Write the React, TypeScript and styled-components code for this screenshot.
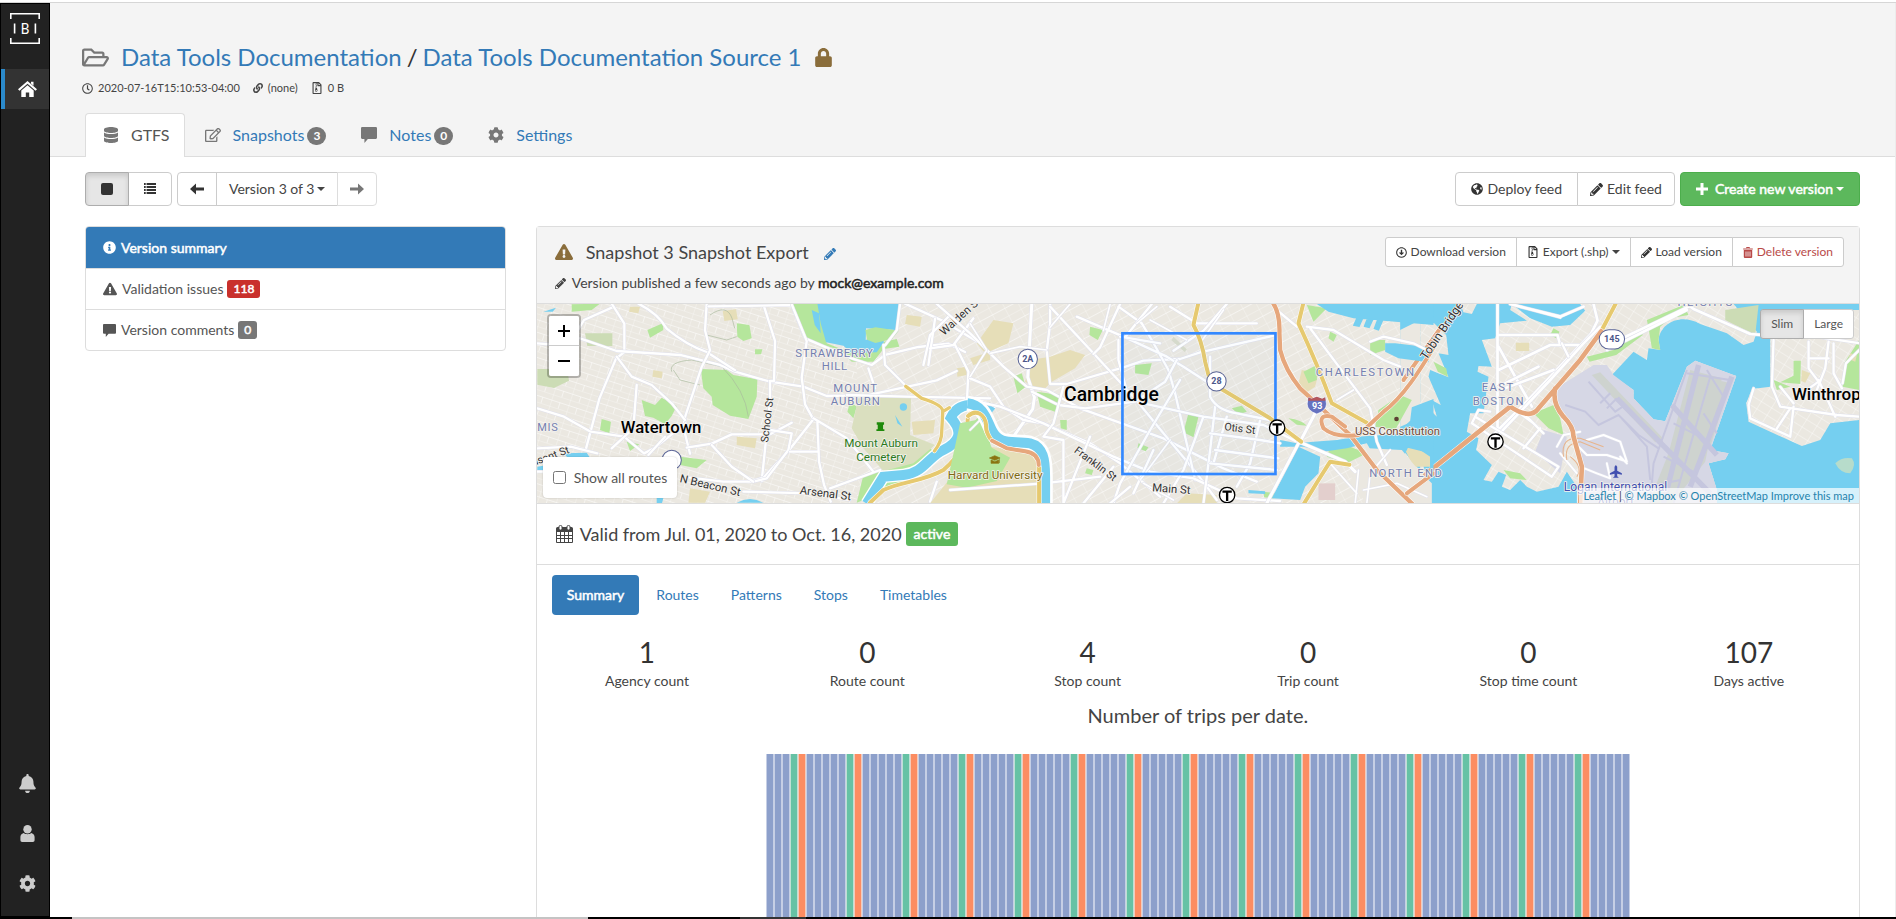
import React from "react";
import styled, { createGlobalStyle, css } from "styled-components";
import {
  FaRegFolderOpen,
  FaRegClock,
  FaRegFileArchive,
  FaDatabase,
  FaRegEdit,
  FaLock,
  FaBell,
  FaGlobeAmericas,
  FaPencilAlt,
  FaInfoCircle,
  FaExclamationTriangle,
  FaLink,
  FaRegArrowAltCircleDown,
  FaCog,
} from "react-icons/fa";

const GlobalStyle = createGlobalStyle`
  * { box-sizing: border-box; }
  body {
    margin: 0;
    background: #fff;
    color: #444;
    font: 14px/20px Lato, "Liberation Sans", sans-serif;
  }
  svg { display: block; flex: none; }
  a { color: #337ab7; text-decoration: none; }
  button { font: inherit; color: inherit; cursor: pointer; }
  h1, h2, h3, p { margin: 0; font-weight: 400; }
`;

const strong = css`
  -webkit-text-stroke: 0.5px currentColor;
`;

const Shell = styled.div`
  display: flex;
  flex-direction: column;
  min-height: 100vh;
`;
const TopRule = styled.div`
  height: 3px;
  border-bottom: 1px solid #d6d6d6;
`;
const Body = styled.div`
  flex: 1;
  display: flex;
  border-right: 1px solid #ececec;
`;
const BottomRule = styled.div`
  height: 2px;
  background: linear-gradient(
    90deg,
    #000 0 72px,
    #c4c4c4 72px 588px,
    #000 588px 740px,
    #333 740px 806px,
    #000 806px
  );
`;

const Sidebar = styled.nav`
  width: 50px;
  flex: none;
  display: flex;
  flex-direction: column;
  background: #222;
  border: 1px solid #000;
`;
const Logo = styled.a`
  display: block;
  padding: 9px 9px 25px;
`;
const SideLink = styled.a<{ $active?: boolean }>`
  display: flex;
  align-items: center;
  justify-content: center;
  height: ${(p) => (p.$active ? 40 : 50)}px;
  color: ${(p) => (p.$active ? "#fff" : "#ccc")};
  padding-left: ${(p) => (p.$active ? 0 : 4)}px;
  ${(p) =>
    p.$active &&
    css`
      background: #333;
      border-left: 4px solid #2b8acb;
    `}
`;
const SideBottom = styled.div`
  margin-top: auto;
  padding-bottom: 8px;
`;

const Main = styled.main`
  flex: 1;
  min-width: 0;
`;
const Header = styled.header`
  background: #f4f4f4;
  border-bottom: 1px solid #ddd;
  padding: 40px 35px 0 32px;
`;
const TitleRow = styled.h1`
  display: flex;
  align-items: center;
  height: 28px;
  font-size: 24px;
  line-height: 28px;
  > svg:first-child { color: #777; margin-right: 12px; }
  > svg:last-child { color: #8a6d3b; margin-left: 12px; }
`;
const Slash = styled.span`
  margin: 0 5px;
  color: #333;
`;
const Meta = styled.div`
  display: flex;
  gap: 13px;
  margin-top: 8px;
  font-size: 11px;
  line-height: 18px;
`;
const MetaItem = styled.span`
  display: flex;
  align-items: center;
  gap: 5px;
`;
const TabBar = styled.nav`
  display: flex;
  margin: 16px 0 -1px 3px;
`;
const Tab = styled.a<{ $active?: boolean }>`
  display: flex;
  align-items: center;
  height: 44px;
  padding: 0 14px 2px 17px;
  margin-right: 2px;
  font-size: 16px;
  border: 1px solid transparent;
  border-bottom: 0;
  border-radius: 4px 4px 0 0;
  > svg { color: #777; margin-right: 12px; }
  ${(p) =>
    p.$active &&
    css`
      background: #fff;
      border-color: #ddd;
      color: #555;
    `}
`;
const Pill = styled.span`
  margin: 3px 0 0 3px;
  padding: 0 6px;
  border-radius: 10px;
  background: #777;
  color: #fff;
  font-size: 12px;
  font-weight: 700;
  line-height: 18px;
`;

const Content = styled.div`
  padding: 15px 35px 0;
`;
const Toolbar = styled.div`
  display: flex;
  justify-content: space-between;
  margin-bottom: 20px;
`;
const Cluster = styled.div`
  display: flex;
  gap: 5px;
`;
const ButtonGroup = styled.div`
  display: flex;
  > button:not(:first-child) { border-top-left-radius: 0; border-bottom-left-radius: 0; margin-left: -1px; }
  > button:not(:last-child) { border-top-right-radius: 0; border-bottom-right-radius: 0; }
`;
const Button = styled.button<{
  $small?: boolean;
  $active?: boolean;
  $tone?: "success" | "danger" | "muted";
}>`
  display: flex;
  align-items: center;
  justify-content: center;
  gap: 4px;
  height: ${(p) => (p.$small ? 30 : 34)}px;
  padding: 0 ${(p) => (p.$small ? 10 : 12)}px;
  border: 1px solid #ccc;
  border-radius: ${(p) => (p.$small ? 3 : 4)}px;
  background: #fff;
  font-size: ${(p) => (p.$small ? 12 : 14)}px;
  white-space: nowrap;
  > svg { color: #333; }
  ${(p) =>
    p.$active &&
    css`
      background: #e6e6e6;
      border-color: #adadad;
      box-shadow: inset 0 3px 5px rgba(0, 0, 0, 0.125);
      z-index: 1;
    `}
  ${(p) =>
    p.$tone === "success" &&
    css`
      background: #5cb85c;
      border-color: #4cae4c;
      color: #fff;
      ${strong}
      > svg { color: #fff; margin-right: 3px; }
    `}
  ${(p) => p.$tone === "danger" && css`color: #b94a48; > svg { color: #b94a48; }`}
  ${(p) => p.$tone === "muted" && css`border-color: #ddd; > svg { color: #777; }`}
`;
const WideButton = styled(Button)`
  padding: 0 15px;
`;
const Caret = styled.span`
  border-top: 4px solid #333;
  border-top-color: currentColor;
  border-left: 4px solid transparent;
  border-right: 4px solid transparent;
  margin-left: -1px;
`;

const Columns = styled.div`
  display: grid;
  grid-template-columns: 421fr 1325fr;
  gap: 30px;
  align-items: stretch;
`;
const List = styled.div`
  align-self: start;
  border: 1px solid #ddd;
  border-radius: 4px;
  overflow: hidden;
`;
const ListItem = styled.a<{ $active?: boolean }>`
  display: flex;
  align-items: center;
  gap: 4px;
  height: 41px;
  padding-left: 17px;
  color: #555;
  > svg { margin-right: 1px; }
  & + & { border-top: 1px solid #ddd; }
  ${(p) =>
    p.$active &&
    css`
      background: #337ab7;
      color: #fff;
      ${strong}
    `}
`;
const Label = styled.span<{ $bg: string; $large?: boolean }>`
  padding: 0 ${(p) => (p.$large ? 8 : 6)}px;
  border-radius: 3px;
  background: ${(p) => p.$bg};
  color: #fff;
  font-size: ${(p) => (p.$large ? 14 : 12)}px;
  line-height: ${(p) => (p.$large ? 24 : 18)}px;
  ${strong}
`;

const Panel = styled.section`
  border: 1px solid #ddd;
  border-bottom: 0;
  border-radius: 4px 4px 0 0;
`;
const PanelHead = styled.div`
  display: flex;
  justify-content: space-between;
  align-items: flex-start;
  height: 77px;
  padding: 10px 15px 0 18px;
  background: #f4f4f4;
  border-bottom: 1px solid #ddd;
`;
const PanelTitle = styled.h2`
  display: flex;
  align-items: center;
  gap: 13px;
  height: 30px;
  font-size: 18px;
  > svg { color: #8a6d3b; }
`;
const EditLink = styled.a`
  padding: 4px 0 0 2px;
`;
const Published = styled.p`
  display: flex;
  align-items: center;
  height: 32px;
  gap: 6px;
  strong { color: #222; font-weight: 400; ${strong} }
`;

const MapBox = styled.div`
  position: relative;
  height: 199px;
  overflow: hidden;
  background: #ebe8e1;
`;
const MapSvg = styled.svg`
  width: 100%;
  height: 199px;
  font-family: Roboto, "Liberation Sans", sans-serif;
`;
const ZoomControl = styled.div`
  position: absolute;
  top: 10px;
  left: 10px;
  border: 2px solid rgba(0, 0, 0, 0.25);
  border-radius: 4px;
  background-clip: padding-box;
`;
const ZoomButton = styled.button`
  display: flex;
  align-items: center;
  justify-content: center;
  width: 30px;
  height: 29px;
  padding: 0;
  border: 0;
  background: #fff;
  border-radius: 2px 2px 0 0;
  & + & { height: 31px; border-top: 1px solid #ccc; border-radius: 0 0 2px 2px; }
`;
const RouteToggle = styled.label`
  position: absolute;
  left: 6px;
  bottom: 5px;
  display: flex;
  align-items: center;
  gap: 8px;
  width: 134px;
  height: 41px;
  padding-left: 10px;
  border-radius: 4px;
  background: #fff;
  box-shadow: 0 0 2px rgba(0, 0, 0, 0.2);
  color: #555;
  input { margin: 0; width: 13px; height: 13px; }
`;
const SizeSwitch = styled(ButtonGroup)`
  position: absolute;
  top: 5px;
  right: 5px;
  color: #555;
`;
const Attribution = styled.div`
  position: absolute;
  right: 0;
  bottom: 0;
  padding: 0 5px;
  background: rgba(255, 255, 255, 0.7);
  font-size: 11px;
  line-height: 15px;
  a { color: #2583ad; }
`;

const Validity = styled.p`
  display: flex;
  align-items: center;
  gap: 4px;
  height: 62px;
  padding-left: 19px;
  border-top: 1px solid #ddd;
  border-bottom: 1px solid #ddd;
  font-size: 18px;
  > svg { margin-right: 3px; }
`;
const Pills = styled.nav`
  display: flex;
  gap: 2px;
  padding: 10px 15px 0;
`;
const PillLink = styled.a<{ $active?: boolean }>`
  padding: 10px 15px;
  border-radius: 4px;
  ${(p) =>
    p.$active &&
    css`
      background: #337ab7;
      color: #fff;
      ${strong}
    `}
`;
const Stats = styled.dl`
  display: grid;
  grid-template-columns: repeat(6, 1fr);
  margin: 19px 0 0;
  text-align: center;
`;
const Stat = styled.div`
  display: flex;
  flex-direction: column-reverse;
  dt { line-height: 22px; }
  dd { margin: 0; font-size: 28px; line-height: 36px; color: #333; }
`;
const ChartTitle = styled.h3`
  margin-top: 11px;
  font-size: 20px;
  line-height: 24px;
  text-align: center;
`;
const ChartSvg = styled.svg`
  margin: 27px auto 0;
`;

/* ---------- icons ---------- */

const HomeIcon = () => (
  <svg width="19" height="16" viewBox="0 0 19 16" fill="currentColor">
    <path d="M9.500 0L19 8.300l-1.500 1.400-8-7-8 7L0 8.300zM13 .8h2.500v4L13 2.600zM9.500 4.200l6.200 5.400V16h-4.500v-4.500H7.800V16H3.300V9.600z" />
  </svg>
);
const UserIcon = () => (
  <svg width="15" height="17" viewBox="0 0 15 17" fill="currentColor">
    <ellipse cx="7.500" cy="4.300" rx="4.200" ry="4.300" />
    <path d="M3.600 8c2 1.600 5.800 1.600 7.800 0 2 .7 3.200 2 3.200 4v3c0 1.200-.6 2-1.800 2H2.200C1 17 .4 16.200.4 15v-3c0-2 1.200-3.300 3.200-4z" />
  </svg>
);
const BellIcon = () => <FaBell size={19} />;
const CommentIcon = ({ size = 14 }: { size?: number }) => (
  <svg width={size} height={size} viewBox="0 0 14 14" fill="currentColor">
    <path d="M1 0h12a1 1 0 0 1 1 1v8.500a1 1 0 0 1-1 1H6L3 14v-3.500H1a1 1 0 0 1-1-1V1a1 1 0 0 1 1-1z" />
  </svg>
);
const StopIcon = () => (
  <svg width="12" height="12" viewBox="0 0 12 12" fill="currentColor">
    <rect width="12" height="12" rx="2" />
  </svg>
);
const ListIcon = () => (
  <svg width="12" height="12" viewBox="0 0 14 12" fill="currentColor" preserveAspectRatio="none">
    <path d="M0 0h2v2H0zM3 0h11v2H3zM0 3h2v2H0zM3 3h11v2H3zM0 6h2v2H0zM3 6h11v2H3zM0 9h2v2H0zM3 9h11v2H3z" />
  </svg>
);
const ArrowIcon = ({ right }: { right?: boolean }) => (
  <svg width="14" height="12" viewBox="0 0 14 12" fill="currentColor">
    <path d={right ? "M14 6L8 .5v4H0v3h8v4z" : "M0 6l6-5.500v4h8v3H6v4z"} />
  </svg>
);
const PlusIcon = () => (
  <svg width="12" height="12" viewBox="0 0 12 12" fill="currentColor">
    <path d="M4.500 0h3v4.500H12v3H7.500V12h-3V7.500H0v-3h4.500z" />
  </svg>
);
const TrashIcon = () => (
  <svg width="10" height="11" viewBox="0 0 10 11">
    <path d="M3.500 1.200V.5h3v.7M.2 2h9.600" stroke="currentColor" fill="none" />
    <path fill="currentColor" d="M.8 3h8.400v7a1 1 0 0 1-1 1H1.800a1 1 0 0 1-1-1z" />
    <path d="M3 4.500v5M5 4.500v5M7 4.500v5" stroke="#fff" strokeWidth=".8" />
  </svg>
);
const CalendarIcon = () => (
  <svg width="17" height="18" viewBox="0 0 17 18">
    <path fill="currentColor" d="M1.500 2h14A1.500 1.500 0 0 1 17 3.500V17a1 1 0 0 1-1 1H1a1 1 0 0 1-1-1V3.500A1.500 1.500 0 0 1 1.500 2z" />
    <path fill="#fff" d="M1 7h3v3H1zM5 7h3v3H5zM9 7h3v3H9zM13 7h3v3h-3zM1 11h3v2H1zM5 11h3v2H5zM9 11h3v2H9zM13 11h3v2h-3zM1 14h3v3H1zM5 14h3v3H5zM9 14h3v3H9zM13 14h3v3h-3z" />
    <rect x="3" y=".5" width="3" height="4.500" rx="1.300" fill="#fff" stroke="currentColor" />
    <rect x="11" y=".5" width="3" height="4.500" rx="1.300" fill="#fff" stroke="currentColor" />
  </svg>
);
const LogoMark = () => (
  <svg width="30" height="31" viewBox="0 0 30 31" fill="none" stroke="#fff" strokeWidth="1.600">
    <path d="M.8 6V.8h28.400V6M.8 25v5.200h28.400V25" />
    <text x="15" y="20.500" textAnchor="middle" fill="#fff" stroke="none" fontSize="14" fontFamily="Roboto, sans-serif">
      B
    </text>
    <path d="M4.600 10.500v10M25.400 10.500v10" />
  </svg>
);

/* ---------- map ---------- */

const C = {
  land: "#ebe8e1",
  water: "#75cff0",
  park: "#b5e69c",
  sand: "#e6deb8",
  yellow: "#e6c96f",
  orange: "#e6a77c",
  apron: "#d6d7e5",
  runway: "#c5c6de",
  place: "#7480b0",
};

const Road = ({ d, w = 7, color = "#fff" }: { d: string; w?: number; color?: string }) => (
  <g fill="none" strokeLinecap="round" strokeLinejoin="round">
    <path d={d} stroke={color === "#fff" ? "#e0e1ec" : "#fff"} strokeWidth={w + 3} />
    <path d={d} stroke={color} strokeWidth={w} />
  </g>
);
const Halo = ({
  x, y, size = 36, fill = "#333", spacing, weight, rotate, anchor = "middle", children,
}: {
  x: number; y: number; size?: number; fill?: string; spacing?: number; weight?: number;
  rotate?: number; anchor?: "start" | "middle" | "end"; children: string;
}) => (
  <text
    x={x} y={y} fontSize={size} fill={fill} textAnchor={anchor} fontWeight={weight}
    letterSpacing={spacing} stroke="#f4f2ee" strokeWidth="5" strokeLinejoin="round" paintOrder="stroke"
    transform={rotate ? `rotate(${rotate} ${x} ${y})` : undefined}
  >
    {children}
  </text>
);
const Shield = ({ x, y, n, rx = 29 }: { x: number; y: number; n: string; rx?: number }) => (
  <g>
    <rect x={x - rx} y={y - 29} width={rx * 2} height="58" rx="29" fill="#fff" stroke="#5a6496" strokeWidth="3" />
    <text x={x} y={y + 9} fontSize="27" fontWeight="700" fill="#4c568a" textAnchor="middle">{n}</text>
  </g>
);
const Station = ({ x, y }: { x: number; y: number }) => (
  <g>
    <circle cx={x} cy={y} r="23" fill="#fff" stroke="#000" strokeWidth="4" />
    <path d={`M${x - 14} ${y - 10}h28M${x} ${y - 10}v28`} stroke="#000" strokeWidth="7" />
  </g>
);

const WestMap = () => (
  <g transform="translate(530 215) scale(.33333)">
    <g fill={C.park}>
      <path d="M785 264L865 266 890 385 965 415 1035 410 1062 380 1100 372 1108 395 1060 402 1030 440 965 440 930 405 830 375z" />
      <path d="M512 462L590 465 610 480 682 493 680 545 655 612 600 602 548 570 545 545 520 520z" />
      <path d="M620 325L658 330 665 370 640 378 622 365z" />
      <path d="M125 268L210 266 185 285 125 290zM352 345L398 325 400 345 360 368zM675 403l22 0-4 15-18 0zM335 555l40 15 20-22 45 25-15 30-20 25-35-20-25-5zM215 612l28 8-5 35-28-10zM290 680l38 8-28 20zM980 863L1000 780 1060 768 1130 745 1200 700 1220 720 1130 800 1060 830z" />
      <path d="M1380 560L1380 863 1230 863 1270 790 1310 720 1315 640 1350 600z" />
      <path d="M960 560l20 15-10 35-18-20zM450 725l80 10-30 25-50-10z" />
    </g>
    <path fill="#dadfbf" d="M985 550L1143 545 1140 660 1215 690 1150 745 1060 768 1000 700 965 640z" />
    <g fill={C.sand}>
      <path d="M578 288l40-5 5 30-40 5zM1130 300l45 5-5 30-45-8zM1320 430l60-20v25l-50 15zM1280 460l28-5 2 25-28 5zM620 665l60 5-5 30-55-10zM300 275l30 0-5 20-28-5zM370 465l28 5-3 20-28-5zM480 820l60 10-15 33h-50zM1145 620l70-5-5 40-60 5z" />
    </g>
    <path fill="#ccdcb5" d="M165 355h82v38h-75zM22 462h90l5 35-45 22-50-10z" />
    <path fill={C.water} d="M862 266L872 325 888 382 940 392 965 415 1040 412 1062 380 1040 360 1007 375 1008 340 1100 345 1112 266z" />
    <path fill={C.park} d="M1006 345l30-8 70 10-20 25-50 12-25-10z" />
    <path fill={C.water} d="M845 285l22 10 5 60-18-25zM40 290l38-12-10 12zM22 755l30-5v14l-30 4zM100 715l70-2 10 15-60 6zM620 863q40-22 80 0zM1095 600l22 35-15-10zM380 845l20 5-4 14h-16z" />
    <circle cx="1120" cy="576" r="11" fill={C.water} />
    <g fill="none" stroke="#a9ba9d" strokeWidth="2">
      <path d="M530 360l60 15 30-10M540 300q50-35 66 10l8 30M425 470q-10-30 60-35l90 20q70 70 80 150M430 465l20 30 60 15" />
    </g>
    <g>
      <Road d="M22 385l60 5 50-25 30-50 90-40" />
      <Road d="M245 266l38 60v85l-25 20-50 120-40 150" />
      <Road d="M150 370l110 38 190 12 120 30 45 20 105 30 100 15 70 28 120-2 210-45 60-28" />
      <Road d="M325 266q60 30 85 75 60 50 120 70l85 55" />
      <Road d="M530 266l-5 80 15 60-25 50-50 150-5 30 20 80" />
      <Road d="M700 268l35 110-3 120-12 0 0 60-25 240" />
      <Road d="M535 274l160-2 90-2 40 100 140 60 60 20 40-30 100-24 90-10 50 25" />
      <Road d="M785 268l45 110-15 110 10 80 25 45-75 95-75 80-35 10" />
      <Road d="M22 580l80 25 80 45 100 15 60 50 30-15 95-75" />
      <Road d="M260 425l45 60 60 25 60 55 40 50" />
      <Road d="M355 720l50-55M245 700l65-60 10-130M470 698l75-12 60-28 115 0 65-35" />
      <Road d="M720 645l65 10-10 50-65 85-40 10-90 0-100-12" />
      <Road d="M545 690l60 65 65 45M780 710h85M862 620l5 120 15 70 20 50M850 610l100 60 80 100M900 820l150-55" />
      <Road d="M950 540l180 5 250 5M1125 266l110 50 100 60 45 25M1060 390l5 60 60 60M1110 266l-10 80-35 45M1015 460l20 60" />
      <Road d="M1180 450l20-90 60-60M1215 310l-20 140M1275 390l40 80-5 100M1330 310l-60 80-70 10M640 830l200 5 120 20M1220 800l-20 60M1280 780l90 60M22 770h20M22 700l100-5 80 20" />
    </g>
    <circle cx="425" cy="735" r="29" fill="#fff" stroke="#5a6496" strokeWidth="3" />
    <path d="M1386 592C1345 560 1285 560 1262 608C1300 650 1290 680 1240 705C1195 725 1180 775 1120 780L1060 785 1010 866" fill="none" stroke="#fff" strokeWidth="38" />
    <path d="M1386 592C1345 560 1285 560 1262 608C1300 650 1290 680 1240 705C1195 725 1180 775 1120 780L1060 785 1010 866" fill="none" stroke={C.water} strokeWidth="30" />
    <Road color={C.yellow} w={10} d="M1127 514L1175 550Q1240 570 1238 590L1235 650Q1235 680 1213 708M1238 590l20-12" />
    <Road color={C.yellow} w={12} d="M1384 660C1370 580 1320 575 1313 610C1312 690 1290 720 1240 765C1180 800 1110 800 1060 825L1020 863" />
    <Halo x={913} y={425} size={34} fill={C.place} spacing={2}>STRAWBERRY</Halo>
    <Halo x={914} y={465} size={34} fill={C.place} spacing={2}>HILL</Halo>
    <Halo x={977} y={530} size={34} fill={C.place} spacing={3}>MOUNT</Halo>
    <Halo x={977} y={570} size={34} fill={C.place} spacing={3}>AUBURN</Halo>
    <Halo x={22} y={647} size={33} fill={C.place} spacing={2} anchor="start">MIS</Halo>
    <Halo x={393} y={654} size={50} weight={500} fill="#000">Watertown</Halo>
    <Halo x={1053} y={695} size={35} fill="#2b7a1c">Mount Auburn</Halo>
    <Halo x={1053} y={738} size={35} fill="#2b7a1c">Cemetery</Halo>
    <path d="M1040 622h22v7h-3v14h4v5h-24v-5h4v-14h-3z" fill="#1e8a0a" />
    <Halo x={722} y={616} size={32} rotate={-83}>School St</Halo>
    <Halo x={1298} y={312} size={34} rotate={-42}>Walden St</Halo>
    <Halo x={538} y={822} size={34} rotate={13}>N Beacon St</Halo>
    <Halo x={885} y={846} size={34} rotate={7}>Arsenal St</Halo>
    <Halo x={65} y={733} size={32} rotate={-20}>asant St</Halo>
  </g>
);

const CentralMap = () => (
  <g transform="translate(970 290) scale(.33333)">
    <g fill={C.sand}>
      <path d="M70 90l60 10-15 60-70 30-25-30zM180 210l60-10 60-20 45 15-30 40-70 40-30 30-50-30zM60 470l145 20v150H-120l80-100zM995 240l50 10-10 40-30 20-20-30zM650 610l90 5v25H620zM1300 470l80 20v40h-50zM0 600l60-30 30 30-20 40H0z" />
    </g>
    <g fill={C.park}>
      <path d="M-30 400l60-12 35 85 55 30-40 70-90 20-60-10zM130 260l25-10 12 40-25 20zM200 305l70 10-15 50-45-15zM360 110l38 10-15 30-25-15zM495 225l50-5-10 35-40-5zM655 370l30 10-15 62-30-15zM785 355l30-8 15 18-25 8zM505 460l30 12-8 12-25-10zM955 385q40 5 55 22l-30-3zM1010 45l60 10-40 40zM1080 125l20 10-10 20-15-10zM1200 150l45 0 0 30-45 15zM1000 245l40-20 0 45-25 10zM1290 315l35 15-50 90-60-10 10-50zM1080 470l60 0 50 20-60 30-60-20zM880 605l40 5-8 15-30-3zM270 390l20 0 0 30-18-5zM350 535l20 5-5 15-20-5z" />
    </g>
    <path fill="#d9dccb" d="M610 140l40 38-6 8-40-35z" />
    <g fill={C.water}>
      <path d="M1040 42L1390 42 1390 105 1240 92 1150 85 1075 65zM1160 80l20 5-12 26-20-4zM1192 80l20 5-14 30-18-5zM1222 85l18 5-14 32-16-5zM1245 160l30 0 100 12v45l-90-12-40-20z" />
      <path d="M905 625L985 470 1050 500 1045 550 1005 590 990 630z" />
      <path d="M930 450l50 10 50-5 70-5 60-10 120-8 40-40 5-40 65-25V640H1380V500l-60-40-20 40-40-10-30 40-40-70-60 15-70 10-60-15-70 0z" />
      <path d="M835 600l50 4v8l-50-2z" />
    </g>
    <path fill={C.land} d="M1195 475l100 5 50 60 40 40v62h-190l-60-60z" />
    <path fill="#e3cfcd" d="M1045 580h50v50h-50z" />
    <g>
      <Road w={9} d="M185 42l-12 220 20 60-5 35-70 100" />
      <Road d="M240 42v60l-10 80 10 100 50 0 170-50 60-20 110-5 60-20 220-50" />
      <Road d="M-100 42L0 130l100 100 70 60 60 10 100 55 250 90 180 90 100 40" />
      <Road d="M240 50l130 140 120 130 90 110 100 120 60 80" />
      <Road d="M320 80l140 60 130 60 50 30 70 45M450 42l-60 130-20 20M445 50l70 50 30 50 50 90 20 70 60 260M600 50l80 50 180 0" />
      <Road d="M0 265l60 25 40 60 60 40 60 10 140 60 90 60 120 100" />
      <Road d="M0 330l90 20 130 50 210 100 110 45 130 20 130 60 130 8" />
      <Road d="M620 210l-35 65-90 60-150 20-80-10-80-40M520 340l180 40 180 25 110 55M630 270l-90 150-90 160-20 60M700 380l-60 160-60 100M735 350l-15 130-20 160M770 380l-40 140M870 390l-30 130-40 70" />
      <Road d="M720 200l0 120q20 40 80 50l100 20M720 430l150 20 60 10M735 480l190 25M720 520l200 20" />
      <Road w={9} d="M985 460l-90 170-5 10M985 455l140 60 30 30M1040 360l-50 95" />
      <Road d="M920 60l60 50M770 42l-70 80-90 60M450 140l120 20M445 150l0 60 30 110M545 42l-80 100M1010 110l80 10 150 90 50 20M1020 115l90 120 90 120 20 100 30 70M1200 155l40-15 90 20 40 20" />
      <Road d="M280 290l-30 110-30 40 60 10 0 190M-60 600l280-20 170-20M360 440l-80 200M430 530l-90 110M480 590l-60 50M550 480l-60 130" />
      <Road w={5} d="M0 100l50 80-50 80M60 190l90-20 80 10M500 100l60-50M540 90l110 60M760 60l-70 100M520 580l90 50M600 450l-90 120M1260 480l-60 70-10 90M1180 600l100-20 90 40M1150 300l-50 30M0 420l50-50M300 42l-60 70M420 42l-20 80M1165 540l-10 100M1080 520l80 90" />
    </g>
    <g fill="none">
      <path d="M-8 340C40 345 50 390 65 420C90 470 130 450 180 460C220 470 225 510 225 560V640" stroke="#fff" strokeWidth="46" />
      <path d="M-8 340C40 345 50 390 65 420C90 470 130 450 180 460C220 470 225 510 225 560V640" stroke={C.water} strokeWidth="30" />
    </g>
    <Road color={C.yellow} w={12} d="M-6 378C20 355 45 375 48 405Q46 425 62 448M207 530V640" />
    <Road color={C.orange} w={12} d="M66 452L110 475 165 484Q205 490 206 525" />
    <Road color={C.yellow} w={12} d="M685 38L670 105Q695 150 705 215L715 255 745 292 900 385 993 455" />
    <Road color={C.yellow} w={12} d="M1000 38L985 100Q1045 230 1085 340L1190 398M1002 640L1045 570 1080 515 1138 524" />
    <Road color={C.orange} w={13} d="M908 38Q930 70 928 130L930 180Q945 240 990 295L1060 360 1140 435 1220 540 1330 645" />
    <Road color={C.orange} w={12} d="M1395 165C1350 240 1300 320 1240 365L1165 435Q1095 445 1060 415 1040 370 1085 380L1125 410M1310 610l80-60" />
    <Halo x={424} y={334} size={58} weight={500} fill="#000">Cambridge</Halo>
    <rect x="457" y="130" width="459" height="422" fill="#3388ff" fillOpacity=".02" stroke="#3388ff" strokeWidth="8" />
    <Shield x={173} y={207} n="2A" />
    <Shield x={739} y={274} n="28" />
    <path d="M1014 322l10 4 16-6 16 6 10-4 3 20q0 20-29 30-29-10-29-30z" fill="#6672c0" stroke="#fff" strokeWidth="2" />
    <path d="M1015 322l9 4 16-6 16 6 9-4 1 10h-52z" fill="#b4575c" />
    <text x="1041" y="357" fontSize="27" fontWeight="700" fill="#fff" textAnchor="middle">93</text>
    <Halo x={808} y={426} size={32} rotate={7}>Otis St</Halo>
    <Halo x={603} y={608} size={34} rotate={4}>Main St</Halo>
    <Halo x={370} y={530} size={32} rotate={37}>Franklin St</Halo>
    <Halo x={1187} y={258} size={34} fill={C.place} spacing={5}>CHARLESTOWN</Halo>
    <Halo x={1308} y={560} size={34} fill={C.place} spacing={4}>NORTH END</Halo>
    <Halo x={75} y={567} size={35} fill="#7f6a10">Harvard University</Halo>
    <path d="M58 504l16-7 16 7-16 7zM63 510l11 5 12-5v10h-23zM88 506v13" fill="#8a7410" stroke="#8a7410" strokeWidth="2" />
    <Halo x={1282} y={435} size={34} fill="#6c4a3c">USS Constitution</Halo>
    <circle cx="1279" cy="387" r="7" fill="#5c4033" />
    <Halo x={1425} y={128} size={36} rotate={-56}>Tobin Bridge</Halo>
    <Station x={921} y={413} />
    <Station x={771} y={615} />
  </g>
);

const EB_LAND =
  "M275 42L330 85 395 110 450 105 495 62 480 42 940 42 1010 125 1000 155 970 165 920 130 840 102C780 68 720 100 715 150L720 180 685 175 680 210 640 185 575 255 640 300 640 325 700 388 735 394 800 230 825 212 948 258 870 480 925 490 915 508 865 520 890 600 890 640 470 640 470 590 440 545 415 590 350 605 320 590 300 570 270 600 245 590 258 555 235 545 215 575 190 570 215 525 168 480 175 445 140 425 150 370 190 370 205 260 172 245 175 228 215 230 185 150 225 145 240 100 320 92 270 60z";
const WIN_LAND =
  "M1317 60L1180 60 1160 100 1050 145 1050 290 995 297 978 340 985 395 1060 430 1145 468 1200 450 1230 400 1317 390z";
const CH_LAND =
  "M0 90L42 100 78 135 85 195 55 190 85 262 30 240 25 260 62 345 35 330 50 380 20 350 0 385zM120 42l50 0-15 30-25-5zM0 500l20 60-5 78H0z";

const EastMap = () => (
  <g transform="translate(1420 290) scale(.33333)">
    <path d="M-60 42H1320V640H15V560L-60 470z" fill={C.water} />
    <path d="M-60 120L0 90 0 385-60 410z" fill={C.land} />
    <g fill={C.land}>
      <path d={EB_LAND} />
      <path d={WIN_LAND} />
      <path d={CH_LAND} />
    </g>
    <g fill="url(#blocks)">
      <path d={EB_LAND} />
      <path d={WIN_LAND} />
      <path d={CH_LAND} />
    </g>
    <g fill={C.park}>
      <path d="M680 90l110-45 15 30-55 10-30 25-5 40 5 30-25-5-10-60zM500 200l80-20 80-60 8 15-80 60-80 20zM340 370l60-25 20 40 10 50-45-20zM250 540l50 10 20 20-50-5zM1120 212l22 0-2 70-60-5 40-20zM1317 150v150l-50-10 5-70zM40 215l38 20 5 25-30-15zM1060 270l50 20-40 10zM400 115l18 10-10 20-18-10z" />
      <path fill="#ccdcb5" d="M915 60l100-15-10 90-90-45z" />
    </g>
    <path fill={C.sand} d="M287 158h40v25h-40zM1145 240l25 10-15 28-12-5zM1290 190l20 5-5 20-20-8z" />
    <path fill={C.apron} d="M415 290L520 225 560 225 580 255 640 300 640 325 700 388 735 394 800 230 825 212 948 258 870 480 925 490 915 508 865 520 890 600 890 640 490 640 470 430 400 340zM370 420l70 20-20 110-75-65z" />
    <path fill="#ced3cf" d="M810 240l95 25-50 250-100 125h-70l60-150zM515 255l25-8 190 200-25 10zM870 265l60 15-60 190-20-10z" />
    <g fill="none" stroke={C.runway}>
      <path strokeWidth="16" d="M835 225L730 640M590 325L870 610M755 345L890 495M935 260L810 590" />
      <path strokeWidth="6" d="M800 240L700 520 690 640M870 260L760 640M860 240l50 80M800 250l130 20M435 345l60 20 40 40 60-30 60 60 60 40M505 275l80 90 30-20M600 380l80 90 10 100M540 340l30-30M560 355l30-30M850 370l40 60M760 400l80 40M680 590l100-20M730 500l100 50" />
    </g>
    <g>
      <Road w={8} d="M232 42v370M232 135h180l8 30h-30L235 240M235 170l100 180M300 50l120 30 70-30M270 42l150 40M415 165h60M520 42l12 50-20 40-190 200-100 100" />
      <Road w={8} d="M540 110l-50 50-100 110-170 180M575 160l230-110M560 180l240-120M800 42l20 15 170 75 60 5M235 290l120-60M240 300l160-60" />
      <Road d="M155 400l20-40 35 5M155 400l240 160 20-30-250-150M360 415l-50 60M310 370l60 60M260 340l80 60M425 160l20 40" />
      <Road d="M1060 150l-5 140 25 60 170 25 70 5M1165 155v80l30 40-70 50M1225 155l-10 80-35 90M1165 205h60M1240 160v90l25 45M1195 270l50 110M1000 295l-15 50 5 40 120 55 10-90M1110 355l-40 60M1080 290l40 50M1317 180l-40 40-10 60M1120 130l200 30" />
      <Road w={6} d="M410 470l20-35 50-10M420 490l50 60M500 450l50-15 50 20 20 60-60-20-60 0-30-30M600 500l20 20M560 520l10 45-40-15-50-20" />
    </g>
    <g fill="none" stroke="#e8b48b" strokeWidth="3">
      <path d="M430 500q-10-60 50-55l70 25M440 510q-10-50 40-55l60 25M450 500q40 30 20 60" />
    </g>
    <Road color={C.yellow} w={12} d="M588 38L545 120" />
    <Road color={C.orange} w={14} d="M543 124L480 210 355 355Q330 390 270 350L20 550-30 600M405 295Q395 340 430 380 460 410 460 440L485 530 480 640" />
    <Road color={C.orange} w={12} d="M60 115L-50 270" />
    <path d="M1245 520q20-20 50-15 15 20-5 45-30 0-45-30z" fill="#b7dccb" />
    <Halo x={234} y={303} size={34} fill={C.place} spacing={4}>EAST</Halo>
    <Halo x={236} y={345} size={34} fill={C.place} spacing={4}>BOSTON</Halo>
    <Halo x={856} y={48} size={34} fill={C.place} spacing={4}>HEIGHTS</Halo>
    <Halo x={1115} y={331} size={51} weight={500} fill="#000" anchor="start">Winthrop</Halo>
    <Halo x={586} y={603} fill="#4250b0">Logan International</Halo>
    <Halo x={586} y={647} fill="#4250b0">Airport</Halo>
    <path d="M583 530l4-5 4 5v12l14 8v4l-14-3v8l5 4h-18l5-4v-8l-14 3v-4l14-8z" fill="#4250b0" />
    <Shield x={575} y={148} n="145" rx={38} />
    <Station x={226} y={455} />
  </g>
);

const RouteMap = () => (
  <MapSvg viewBox="537 304 1322 199" preserveAspectRatio="xMidYMid slice" role="img" aria-label="Map of the feed area">
    <defs>
      <pattern id="streets" width="18" height="12" patternUnits="userSpaceOnUse" patternTransform="rotate(18)">
        <path d="M0 0H18M0 0V12M9 6V12M0 6H18" stroke="#fff" strokeWidth=".7" fill="none" opacity=".7" />
      </pattern>
      <pattern id="streetsEast" width="14" height="16" patternUnits="userSpaceOnUse" patternTransform="rotate(-28)">
        <path d="M0 0H14M0 0V16M0 8H14" stroke="#fff" strokeWidth=".7" fill="none" opacity=".7" />
      </pattern>
      <pattern id="blocks" width="36" height="26" patternUnits="userSpaceOnUse" patternTransform="rotate(32)">
        <path d="M0 0H36M0 0V26" stroke="#fff" strokeWidth="2.500" fill="none" opacity=".8" />
      </pattern>
    </defs>
    <rect x="537" y="304" width="1322" height="199" fill={C.land} />
    <rect x="537" y="304" width="320" height="199" fill="url(#streets)" />
    <rect x="857" y="304" width="570" height="199" fill="url(#streetsEast)" />
    <WestMap />
    <EastMap />
    <CentralMap />
  </MapSvg>
);

/* ---------- chart ---------- */

const DAYS = Array.from({ length: 108 }, (_, i) => i);
const WEEK = { weekday: ["#8da0cb", "#c6cfe5"], saturday: ["#66c2a5", "#bfe0d5"], sunday: ["#fc8d62", "#f3cbbc"] };
const dayColors = (i: number) => (i % 7 === 3 ? WEEK.saturday : i % 7 === 4 ? WEEK.sunday : WEEK.weekday);

const TripsChart = () => (
  <ChartSvg width="864" height="163" viewBox="0 0 864 163" role="img" aria-label="Number of trips per date">
    {DAYS.map((i) => (
      <g key={i}>
        <rect x={i * 8} width="8" height="163" fill={dayColors(i)[1]} />
        <rect x={i * 8 + 1} width="6" height="163" fill={dayColors(i)[0]} />
      </g>
    ))}
  </ChartSvg>
);

const STATS: [string, string][] = [
  ["Agency count", "1"],
  ["Route count", "0"],
  ["Stop count", "4"],
  ["Trip count", "0"],
  ["Stop time count", "0"],
  ["Days active", "107"],
];

export default function App() {
  return (
    <Shell>
      <GlobalStyle />
      <TopRule />
      <Body>
        <Sidebar aria-label="Application">
          <Logo href="#" aria-label="IBI"><LogoMark /></Logo>
          <SideLink href="#" $active aria-label="Home"><HomeIcon /></SideLink>
          <SideBottom>
            <SideLink href="#" aria-label="Alerts"><BellIcon /></SideLink>
            <SideLink href="#" aria-label="Account"><UserIcon /></SideLink>
            <SideLink href="#" aria-label="Settings"><FaCog size={17} /></SideLink>
          </SideBottom>
        </Sidebar>
        <Main>
          <Header>
            <TitleRow>
              <FaRegFolderOpen size={27} />
              <a href="#">Data Tools Documentation</a>
              <Slash>/</Slash>
              <a href="#">Data Tools Documentation Source 1</a>
              <FaLock size={19} />
            </TitleRow>
            <Meta>
              <MetaItem><FaRegClock size={11} />2020-07-16T15:10:53-04:00</MetaItem>
              <MetaItem><FaLink size={10} />(none)</MetaItem>
              <MetaItem><FaRegFileArchive size={12} />0 B</MetaItem>
            </Meta>
            <TabBar>
              <Tab href="#" $active><FaDatabase size={16} />GTFS</Tab>
              <Tab href="#"><FaRegEdit size={16} />Snapshots<Pill>3</Pill></Tab>
              <Tab href="#"><CommentIcon size={16} />Notes<Pill>0</Pill></Tab>
              <Tab href="#"><FaCog size={16} />Settings</Tab>
            </TabBar>
          </Header>
          <Content>
            <Toolbar>
              <Cluster>
                <ButtonGroup>
                  <WideButton $active aria-label="Single version"><StopIcon /></WideButton>
                  <WideButton aria-label="Version list"><ListIcon /></WideButton>
                </ButtonGroup>
                <ButtonGroup>
                  <Button aria-label="Previous version"><ArrowIcon /></Button>
                  <Button>Version 3 of 3<Caret /></Button>
                  <Button $tone="muted" aria-label="Next version"><ArrowIcon right /></Button>
                </ButtonGroup>
              </Cluster>
              <Cluster>
                <ButtonGroup>
                  <WideButton><FaGlobeAmericas size={12} />Deploy feed</WideButton>
                  <Button><FaPencilAlt size={13} />Edit feed</Button>
                </ButtonGroup>
                <WideButton $tone="success"><PlusIcon />Create new version<Caret /></WideButton>
              </Cluster>
            </Toolbar>
            <Columns>
              <List>
                <ListItem href="#" $active><FaInfoCircle size={13} />Version summary</ListItem>
                <ListItem href="#"><FaExclamationTriangle size={14} />Validation issues<Label $bg="#c9302c">118</Label></ListItem>
                <ListItem href="#"><CommentIcon size={13} />Version comments<Label $bg="#777">0</Label></ListItem>
              </List>
              <Panel>
                <PanelHead>
                  <div>
                    <PanelTitle>
                      <FaExclamationTriangle size={18} />
                      Snapshot 3 Snapshot Export
                      <EditLink href="#" aria-label="Rename version"><FaPencilAlt size={12} /></EditLink>
                    </PanelTitle>
                    <Published>
                      <FaPencilAlt size={11} />
                      <span>Version published a few seconds ago by <strong>mock@example.com</strong></span>
                    </Published>
                  </div>
                  <ButtonGroup>
                    <Button $small><FaRegArrowAltCircleDown size={11} />Download version</Button>
                    <Button $small><FaRegFileArchive size={12} />Export (.shp)<Caret /></Button>
                    <Button $small><FaPencilAlt size={11} />Load version</Button>
                    <Button $small $tone="danger"><TrashIcon />Delete version</Button>
                  </ButtonGroup>
                </PanelHead>
                <MapBox>
                  <RouteMap />
                  <ZoomControl>
                    <ZoomButton aria-label="Zoom in">
                      <svg width="12" height="12" viewBox="0 0 12 12" stroke="#000" strokeWidth="2"><path d="M0 6h12M6 0v12" /></svg>
                    </ZoomButton>
                    <ZoomButton aria-label="Zoom out">
                      <svg width="12" height="12" viewBox="0 0 12 12" stroke="#000" strokeWidth="2"><path d="M0 6h12" /></svg>
                    </ZoomButton>
                  </ZoomControl>
                  <RouteToggle><input type="checkbox" />Show all routes</RouteToggle>
                  <SizeSwitch>
                    <Button $small $active>Slim</Button>
                    <Button $small>Large</Button>
                  </SizeSwitch>
                  <Attribution>
                    <a href="#">Leaflet</a> | <a href="#">© Mapbox</a> <a href="#">© OpenStreetMap</a> <a href="#">Improve this map</a>
                  </Attribution>
                </MapBox>
                <Validity>
                  <CalendarIcon />
                  Valid from Jul. 01, 2020 to Oct. 16, 2020
                  <Label $bg="#5cb85c" $large>active</Label>
                </Validity>
                <Pills>
                  <PillLink href="#" $active>Summary</PillLink>
                  <PillLink href="#">Routes</PillLink>
                  <PillLink href="#">Patterns</PillLink>
                  <PillLink href="#">Stops</PillLink>
                  <PillLink href="#">Timetables</PillLink>
                </Pills>
                <Stats>
                  {STATS.map(([label, value]) => (
                    <Stat key={label}>
                      <dt>{label}</dt>
                      <dd>{value}</dd>
                    </Stat>
                  ))}
                </Stats>
                <ChartTitle>Number of trips per date.</ChartTitle>
                <TripsChart />
              </Panel>
            </Columns>
          </Content>
        </Main>
      </Body>
      <BottomRule />
    </Shell>
  );
}
